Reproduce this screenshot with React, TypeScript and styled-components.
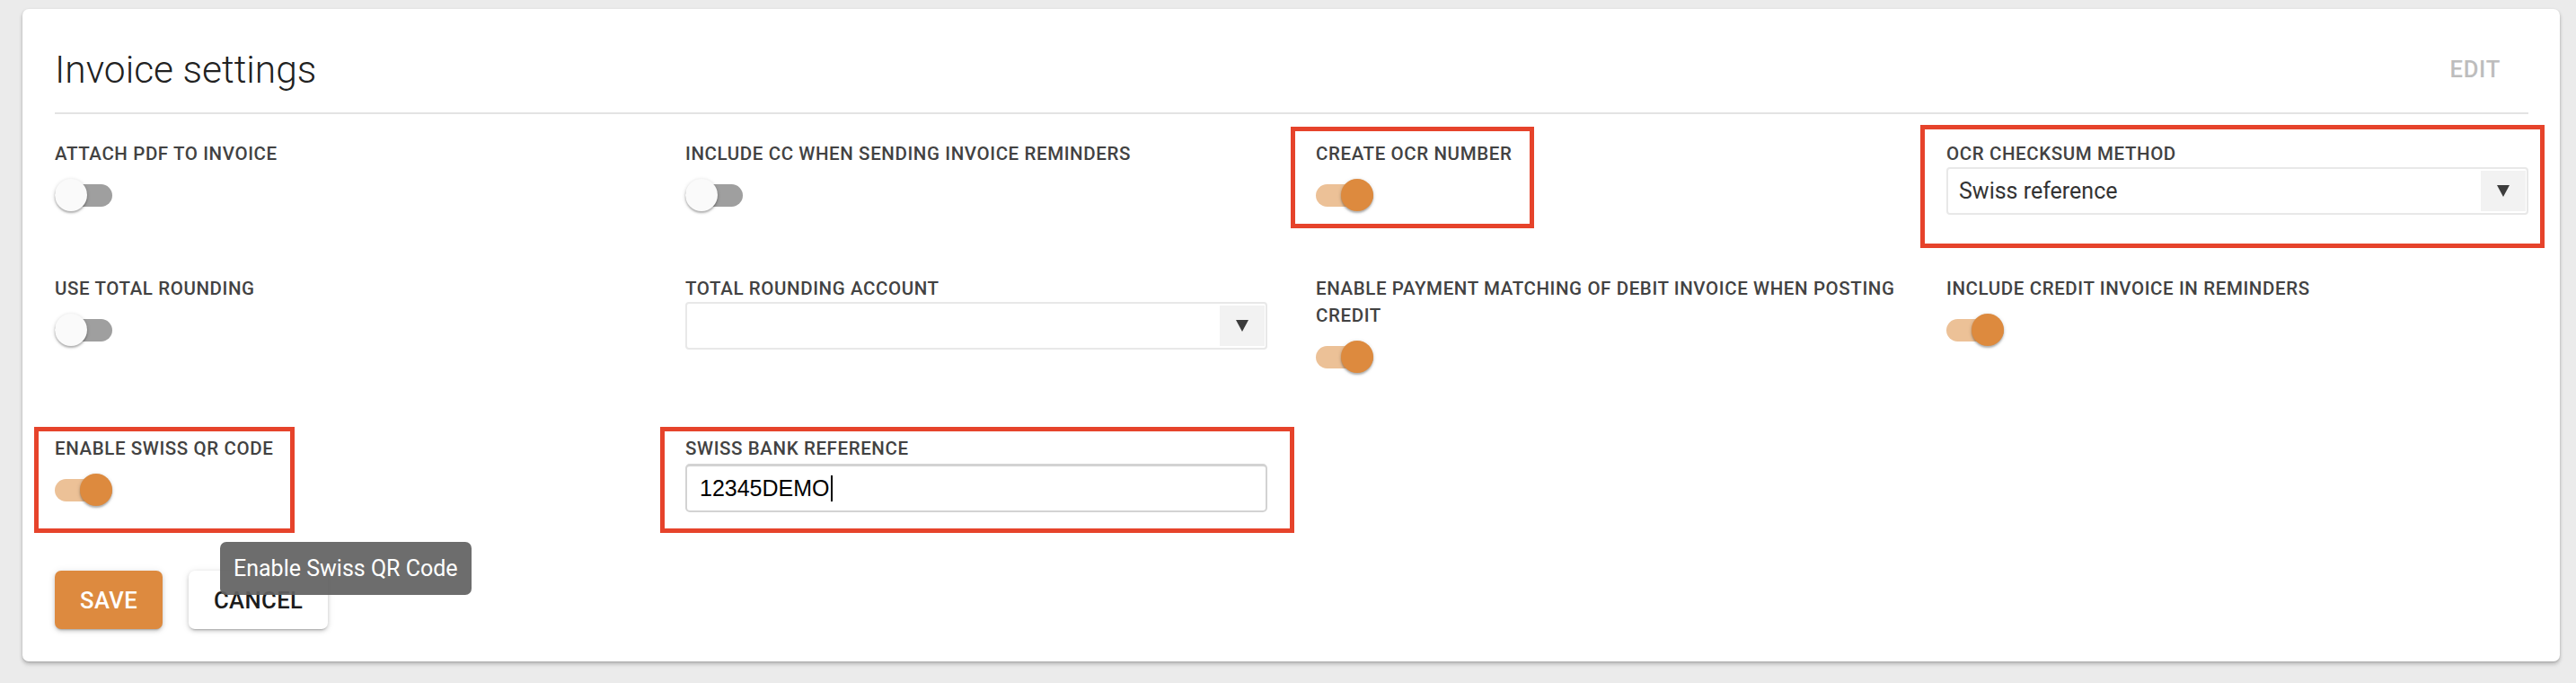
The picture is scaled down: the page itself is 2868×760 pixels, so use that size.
import styled, { createGlobalStyle } from "styled-components";

const GlobalStyle = createGlobalStyle`
    html, body {
        margin: 0;
        padding: 0;
        background: #ebebeb;
        font-family: Roboto, "Liberation Sans", Arial, sans-serif;
    }
`;

interface MarkerProps {
    $top: number;
    $left: number;
    $w: number;
    $h: number;
}

interface SwitchProps {
    $on: boolean;
}

const Page = styled.div`
    padding: 10px 18px 24px 25px;
`;

const Card = styled.section`
    background: #fff;
    border-radius: 7px;
    padding: 34px 35px 36px 36px;
    box-shadow: 0 2px 4px rgba(0, 0, 0, 0.18), 0 4px 5px rgba(0, 0, 0, 0.08), 0 1px 2px rgba(0, 0, 0, 0.1);
`;

const Header = styled.header`
    display: flex;
    align-items: center;
    justify-content: space-between;
    height: 66px;
`;

const Title = styled.h2`
    margin: 0;
    font-size: 42.5px;
    font-weight: 300;
    line-height: 1.2;
    color: #212121;
`;

const TextButton = styled.button`
    height: 66px;
    padding: 0 31px;
    border: none;
    background: transparent;
    font-family: Roboto, sans-serif;
    font-size: 25.6px;
    font-weight: 500;
    letter-spacing: 0.7px;
    text-transform: uppercase;
    color: #bdbdbd;
`;

const Divider = styled.hr`
    margin: 15px 0 29px;
    border: none;
    height: 2px;
    background: #e3e3e3;
`;

const FieldGrid = styled.div`
    display: grid;
    grid-template-columns: repeat(4, 648px);
    column-gap: 54px;
    row-gap: 67px;
    align-items: start;
`;

const Field = styled.div`
    position: relative;
`;

const Label = styled.div`
    font-size: 20.5px;
    font-weight: 500;
    letter-spacing: 0.6px;
    line-height: 30px;
    color: #424242;
    text-transform: uppercase;
    white-space: nowrap;
`;

const SwitchRoot = styled.div<SwitchProps>`
    position: relative;
    display: flex;
    align-items: center;
    justify-content: ${(p) => (p.$on ? "flex-end" : "flex-start")};
    width: 64px;
    height: 36px;
    margin: 13px 0 2px;

    &::before {
        content: "";
        position: absolute;
        left: 0;
        right: 0;
        top: 6px;
        height: 25px;
        border-radius: 13px;
        background: ${(p) => (p.$on ? "#ecc197" : "#9f9f9f")};
    }
`;

const Thumb = styled.span<SwitchProps>`
    position: relative;
    width: 36px;
    height: 36px;
    border-radius: 50%;
    background: ${(p) => (p.$on ? "#dd8a3e" : "#fafafa")};
    box-shadow: 0 2px 2px rgba(0, 0, 0, 0.22), 0 1px 4px rgba(0, 0, 0, 0.18);
`;

const SelectBox = styled.div`
    display: flex;
    box-sizing: border-box;
    height: 53px;
    border: 2px solid #e8e8e8;
    border-radius: 4px;
    background: #fff;
`;

const SelectValue = styled.div`
    flex: 1;
    display: flex;
    align-items: center;
    padding-left: 12px;
    font-size: 25px;
    color: #333;
`;

const SelectArrow = styled.div`
    width: 50px;
    margin: 2px 1px 2px 0;
    display: flex;
    align-items: center;
    justify-content: center;
    background: #f2f2f2;
`;

const TextBox = styled.div`
    display: flex;
    align-items: center;
    box-sizing: border-box;
    height: 54px;
    margin-top: 2px;
    padding-left: 14px;
    border: 2px solid #d3d3d3;
    border-top-width: 3px;
    border-radius: 5px;
    font-family: "Liberation Sans", Arial, sans-serif;
    font-size: 25px;
    color: #000;
`;

const Caret = styled.span`
    display: inline-block;
    width: 2px;
    height: 29px;
    margin-left: 1px;
    background: #000;
`;

const Marker = styled.div<MarkerProps>`
    position: absolute;
    top: ${(p) => p.$top}px;
    left: ${(p) => p.$left}px;
    width: ${(p) => p.$w}px;
    height: ${(p) => p.$h}px;
    box-sizing: border-box;
    border: 5px solid #e6432b;
    pointer-events: none;
`;

const Footer = styled.div`
    position: relative;
    display: flex;
    gap: 29px;
    margin-top: 65px;
`;

const ActionButton = styled.button<{ $primary?: boolean }>`
    height: 65px;
    padding: 0 28px;
    border: none;
    border-radius: 7px;
    font-family: Roboto, sans-serif;
    font-size: 25.6px;
    font-weight: 500;
    letter-spacing: 0.4px;
    text-transform: uppercase;
    background: ${(p) => (p.$primary ? "#dd8a3f" : "#fff")};
    color: ${(p) => (p.$primary ? "#fff" : "#1c1c1c")};
    box-shadow: 0 3px 2px -2px rgba(0, 0, 0, 0.2), 0 2px 4px rgba(0, 0, 0, 0.16), 0 1px 9px rgba(0, 0, 0, 0.1);
`;

const Tooltip = styled.div`
    position: absolute;
    left: 184px;
    top: -32px;
    height: 59px;
    padding: 0 15px;
    border-radius: 7px;
    background: rgba(97, 97, 97, 0.92);
    color: #fff;
    font-size: 25px;
    line-height: 59px;
    white-space: nowrap;
`;

const Toggle = ({ on }: { on: boolean }) => (
    <SwitchRoot $on={on}>
        <Thumb $on={on} />
    </SwitchRoot>
);

const Select = ({ value }: { value: string }) => (
    <SelectBox>
        <SelectValue>{value}</SelectValue>
        <SelectArrow>
            <svg width="14" height="13" viewBox="0 0 14 13">
                <polygon points="0,0 14,0 7,13" fill="#3c3c3c" />
            </svg>
        </SelectArrow>
    </SelectBox>
);

const App = () => {
    return (
        <Page>
            <GlobalStyle />
            <Card>
                <Header>
                    <Title>Invoice settings</Title>
                    <TextButton>Edit</TextButton>
                </Header>
                <Divider />
                <FieldGrid>
                    <Field>
                        <Label>Attach pdf to invoice</Label>
                        <Toggle on={false} />
                    </Field>
                    <Field>
                        <Label>Include cc when sending invoice reminders</Label>
                        <Toggle on={false} />
                    </Field>
                    <Field>
                        <Label>Create OCR number</Label>
                        <Toggle on />
                        <Marker $top={-15} $left={-28} $w={271} $h={113} />
                    </Field>
                    <Field>
                        <Label>OCR checksum method</Label>
                        <Select value="Swiss reference" />
                        <Marker $top={-17} $left={-29} $w={695} $h={137} />
                    </Field>

                    <Field>
                        <Label>Use total rounding</Label>
                        <Toggle on={false} />
                    </Field>
                    <Field>
                        <Label>Total rounding account</Label>
                        <Select value="" />
                    </Field>
                    <Field>
                        <Label>
                            Enable payment matching of debit invoice when posting
                            <br />
                            credit
                        </Label>
                        <Toggle on />
                    </Field>
                    <Field>
                        <Label>Include credit invoice in reminders</Label>
                        <Toggle on />
                    </Field>

                    <Field>
                        <Label>Enable Swiss QR code</Label>
                        <Toggle on />
                        <Marker $top={-9} $left={-23} $w={290} $h={118} />
                    </Field>
                    <Field>
                        <Label>Swiss bank reference</Label>
                        <TextBox>
                            12345DEMO
                            <Caret />
                        </TextBox>
                        <Marker $top={-9} $left={-28} $w={706} $h={118} />
                    </Field>
                </FieldGrid>
                <Footer>
                    <ActionButton $primary>Save</ActionButton>
                    <ActionButton>Cancel</ActionButton>
                    <Tooltip>Enable Swiss QR Code</Tooltip>
                </Footer>
            </Card>
        </Page>
    );
};

export default App;
